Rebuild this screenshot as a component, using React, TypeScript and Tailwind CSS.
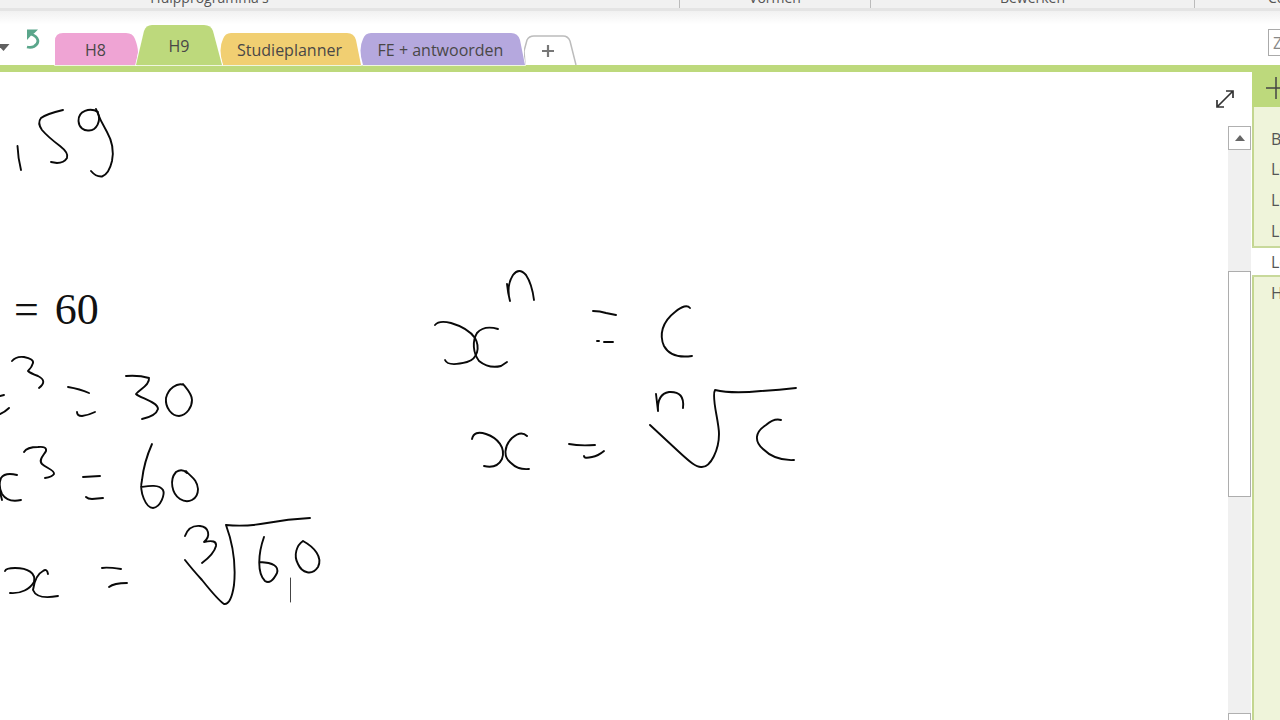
import React from "react";

type Tab = {
  label: string;
  fill: string;
  path: string;
  box: string;
  width: number;
  height: number;
};

const tabs: Tab[] = [
  {
    label: "H8",
    fill: "#efa4d4",
    path: "M0 32V8Q0 0 8 0H71Q78 0 80 6Q83 14 83 19L81 32Z",
    box: "w-[83px] h-8 pr-[2px] pt-[2px]",
    width: 83,
    height: 32,
  },
  {
    label: "H9",
    fill: "#bdd97c",
    path: "M0 40L8 6Q10 0 16 0H68Q75 0 77 6L86 40Z",
    box: "w-[86px] h-10 -ml-[2px] pt-[2px] z-10",
    width: 86,
    height: 40,
  },
  {
    label: "Studieplanner",
    fill: "#f1cf72",
    path: "M3 32Q-2 16 3 6Q5 0 11 0H127Q134 0 136 7L141 32Z",
    box: "w-[141px] h-8 -ml-[2px] pr-[2px] pt-[2px]",
    width: 141,
    height: 32,
  },
  {
    label: "FE + antwoorden",
    fill: "#b5a8de",
    path: "M3 32Q-2 16 3 6Q5 0 11 0H151Q158 0 160 7L165 32Z",
    box: "w-[165px] h-8 -ml-[1px] pr-1 pt-[2px]",
    width: 165,
    height: 32,
  },
];

const pages = ["B", "Le", "Le", "Le", "Le", "H"];
const activePage = 4;

const strokes: string[] = [
  // ,59
  "M17.500 146Q18 158 21 170",
  "M63 110Q46 114 41 118Q37 123 42 130Q48 137 60 146Q69 153 67 158Q64 163 57 163L51 162",
  "M98 112C90 107 78 111 78.500 121C79 128 84 131 89 130.500C97 130 101 121 98 113",
  "M96 109Q100 120 107 132Q115 146 112 161Q109 174 102 176.500Q96 177 91 171",
  // first row
  "M0 396L4 395M0 414Q5 412 9 408",
  "M12 361Q16 356 24 357Q34 359 33 363Q32 367 28 371Q30 373 38 376Q48 381 39 388",
  "M68 387Q80 389 89 393",
  "M77 412Q77 416 82 416Q89 415 95 412",
  "M126 376Q139 375 149 378C150 385 140 389 136 394C140 398 158 402 158 409Q156 416 142 419",
  "M184 385C177 382 168 389 166 398C165 408 172 416 179 416C187 415 192 407 192 400C192 394 187 389 183 384",
  // second row
  "M17 475Q5 472 1 478Q-2 486 2 494Q8 503 21 500",
  "M0 492L2 500",
  "M24 452Q27 447 38 447Q47 446 46 451C44 455 38 460 42 464C46 468 55 470 54 474Q52 477 45 478",
  "M83 477L100 476",
  "M86 497Q88 499 92 499L103 498",
  "M152 444Q144 462 142 480C139 492 146 508 153 508C161 507 165 494 163 490C159 484 148 486 141 487",
  "M187 473Q182 468 176 472C169 480 172 494 180 499C188 504 198 500 198 489C197 479 191 477 186 471",
  // third row
  "M5 571Q6 568 15 568C28 568 36 573 34 582C30 589 21 594 10 593",
  "M48 574Q47 568 43 571C37 574 34 583 33 590Q37 600 58 596",
  "M102 568Q107 567 121 569",
  "M109 587Q114 583 127 583",
  "M185 536Q189 525 200 526C209 527 211 536 204 542Q217 539 216 546Q214 554 202 563",
  "M185 560Q192 569 202 580Q218 600 224 604Q231 605 234 585Q237 555 226 525Q246 527 267 523Q288 519 310 518",
  "M264 537C258 554 257 573 265 581Q271 585 277 573Q280 563 260 562",
  "M303 541C297 545 293 555 298 564C302 573 312 576 318 567C323 557 314 547 303 541",
  // general formula
  "M507 284Q508 294 510 301Q506 286 513 275Q519 267 526 275Q532 284 534 300",
  "M435 325Q439 320 451 323Q468 328 475 338C480 347 478 359 467 362Q448 367 445 360",
  "M498 329Q484 325 477 333C472 341 473 353 479 361Q489 369 501 366L507 362",
  "M593 311Q600 311 606 313L616 315",
  "M597 341L599 341M604 342L613 342",
  "M690 308Q686 303 675 312C662 322 659 335 664 346Q671 359 692 356",
  // root formula
  "M472 439Q474 430 486 434C498 438 506 448 502 459Q497 469 484 466",
  "M527 436Q521 430 512 438C504 446 503 457 511 463Q518 470 529 469",
  "M569 444Q579 446 595 445",
  "M584 456Q584 459 592 457Q598 456 604 451",
  "M656 394L658 411Q657 394 669 392Q685 391 683 408",
  "M650 425L678 451C691 463 696 467 701 467C711 468 719 449 719 434C719 421 711 397 715 390Q732 394 761 391Q779 390 796 388",
  "M781 420Q774 418 766 425C755 432 754 441 763 449Q775 461 794 460",
];

function RibbonGroup({ className, label }: { className: string; label: string }) {
  return (
    <div className={`flex h-2 shrink-0 items-end justify-center ${className}`}>
      <span className="mb-1 text-sm leading-3 text-[#555]">{label}</span>
    </div>
  );
}

function SectionTab({ tab }: { tab: Tab }) {
  return (
    <button
      type="button"
      role="tab"
      aria-selected={tab.label === "H9"}
      className={`relative flex shrink-0 items-center justify-center text-base text-[#494747] ${tab.box}`}
    >
      <svg
        className="absolute inset-0 overflow-visible"
        width={tab.width}
        height={tab.height}
        viewBox={`0 0 ${tab.width} ${tab.height}`}
        aria-hidden="true"
      >
        <path d={tab.path} fill={tab.fill} stroke="#fff" strokeWidth="1.5" paintOrder="stroke" />
      </svg>
      <span className="relative whitespace-nowrap">{tab.label}</span>
    </button>
  );
}

function Ink() {
  return (
    <svg
      className="absolute left-0 top-0 overflow-visible"
      width="820"
      height="560"
      viewBox="0 72 820 560"
      fill="none"
      stroke="#090909"
      strokeWidth="1.9"
      strokeLinecap="round"
      strokeLinejoin="round"
      aria-hidden="true"
    >
      {strokes.map((d) => (
        <path key={d} d={d} />
      ))}
      <path d="M290.500 578V602" stroke="#444" strokeWidth="1" />
    </svg>
  );
}

export default function App() {
  return (
    <div className="flex h-screen flex-col overflow-hidden bg-white font-['Open_Sans','Noto_Sans',sans-serif]">
      <header className="flex h-[11px] shrink-0 overflow-hidden border-b-[3px] border-[#e4e4e4] bg-[#f1f1f1]">
        <RibbonGroup className="-ml-[260px] w-[940px] border-r border-[#bbb]" label="Hulpprogramma's" />
        <RibbonGroup className="w-[191px] border-r border-[#bbb]" label="Vormen" />
        <RibbonGroup className="w-[324px] border-r border-[#bbb]" label="Bewerken" />
        <RibbonGroup className="pl-[73px]" label="Co" />
      </header>

      <nav className="flex h-[54px] shrink-0 items-end bg-gradient-to-b from-[#f1f1f1] via-white via-25% to-white" aria-label="Secties">
        <div className="flex h-full w-[55px] shrink-0 pt-[18px]">
          <button type="button" aria-label="Notitieblokken" className="h-6 w-6 pt-3">
            <svg width="10" height="8" viewBox="0 0 10 8" aria-hidden="true">
              <path d="M-3 1H9.500L3.500 8Z" fill="#606060" />
            </svg>
          </button>
          <button type="button" aria-label="Ongedaan maken" className="h-5 w-5">
            <svg width="20" height="20" viewBox="24 29 20 20" fill="none" stroke="#5aa68b" aria-hidden="true">
              <path d="M31 34C39 37 40 43 34 46.500Q31 48 27 47" strokeWidth="2.800" />
              <path d="M27 29.500H38L34.500 33L31 35.500L27 40Z" fill="#5aa68b" stroke="none" />
            </svg>
          </button>
        </div>
        <div role="tablist" className="flex items-end">
          {tabs.map((tab) => (
            <SectionTab key={tab.label} tab={tab} />
          ))}
        </div>
        <button type="button" aria-label="Nieuwe sectie" className="-ml-px h-[30px] w-[53px] shrink-0">
          <svg width="53" height="30" viewBox="0 0 53 30" fill="none" aria-hidden="true">
            <path d="M1 30L0 16L3 5Q5 1 10 1H39Q44 1 46 6L52 30" stroke="#bcbcbc" strokeWidth="1.5" />
            <path d="M18 16H30M24 10V22" stroke="#777" strokeWidth="2.200" />
          </svg>
        </button>
        <label className="mb-[9px] ml-auto flex h-[27px] w-3 shrink-0 overflow-hidden border border-r-0 border-[#aaa]">
          <input
            type="text"
            aria-label="Zoeken"
            placeholder="Z"
            className="w-20 shrink-0 pl-1 text-base text-[#777] outline-none placeholder:text-[#888]"
          />
        </label>
      </nav>

      <div className="h-[7px] shrink-0 bg-[#bdd97c]" />

      <div className="flex min-h-0 flex-1">
        <main className="relative min-w-0 flex-1 overflow-hidden">
          <p className="absolute left-[14px] top-[214px] flex gap-4 font-['Liberation_Serif',serif] text-[44px] leading-[48px] text-[#111]">
            <span>=</span>
            <span>60</span>
          </p>
          <Ink />
        </main>

        <div className="flex w-6 shrink-0 flex-col pr-px">
          <div className="flex h-[54px] shrink-0 justify-end pr-4 pt-4">
            <button type="button" aria-label="Volledige pagina" className="h-5 w-5 shrink-0">
              <svg width="20" height="20" viewBox="0 0 20 20" fill="none" stroke="#333" strokeWidth="1.700" aria-hidden="true">
                <path d="M2 19L18 3M11 3H18V10M2 12V19H9" />
              </svg>
            </button>
          </div>
          <button
            type="button"
            aria-label="Omhoog schuiven"
            className="flex h-6 shrink-0 items-center justify-center border border-[#b0b0b0] bg-white"
          >
            <svg width="10" height="6" viewBox="0 0 10 6" aria-hidden="true">
              <path d="M0 6L5 0L10 6Z" fill="#666" />
            </svg>
          </button>
          <div className="flex flex-1 flex-col bg-[#f0f0f0]">
            <div className="basis-[121px]" />
            <div className="h-[226px] border border-[#adadad] bg-white" />
          </div>
          <button type="button" aria-label="Omlaag schuiven" className="h-[7px] shrink-0 border border-b-0 border-[#b0b0b0] bg-white" />
        </div>

        <aside className="flex w-7 shrink-0 flex-col overflow-hidden">
          <button type="button" aria-label="Pagina toevoegen" className="h-[35px] shrink-0 bg-[#bdd97c] pl-[14px]">
            <svg className="-mt-1" width="22" height="22" viewBox="0 0 22 22" fill="none" stroke="#444" strokeWidth="1.5" aria-hidden="true">
              <path d="M0 11H22M10 0V22" />
            </svg>
          </button>
          <ul className="flex flex-1 flex-col bg-[#eff4da]">
            {pages.map((page, i) => (
              <li
                key={i}
                className={
                  i === activePage
                    ? "h-[31px] border-y-2 border-[#c8d99b] bg-white"
                    : i === 0
                      ? "h-[46px] border-l-2 border-[#c3d68f] pt-4"
                      : "h-[31px] border-l-2 border-[#c3d68f]"
                }
              >
                <a
                  href="#"
                  className={`block whitespace-nowrap text-base text-[#555] ${i === activePage ? "pl-[19px] leading-[29px]" : "pl-[17px] leading-[32px]"}`}
                >
                  {page}
                </a>
              </li>
            ))}
            <li className="flex-1 border-l-2 border-[#c3d68f]" />
          </ul>
        </aside>
      </div>
    </div>
  );
}
